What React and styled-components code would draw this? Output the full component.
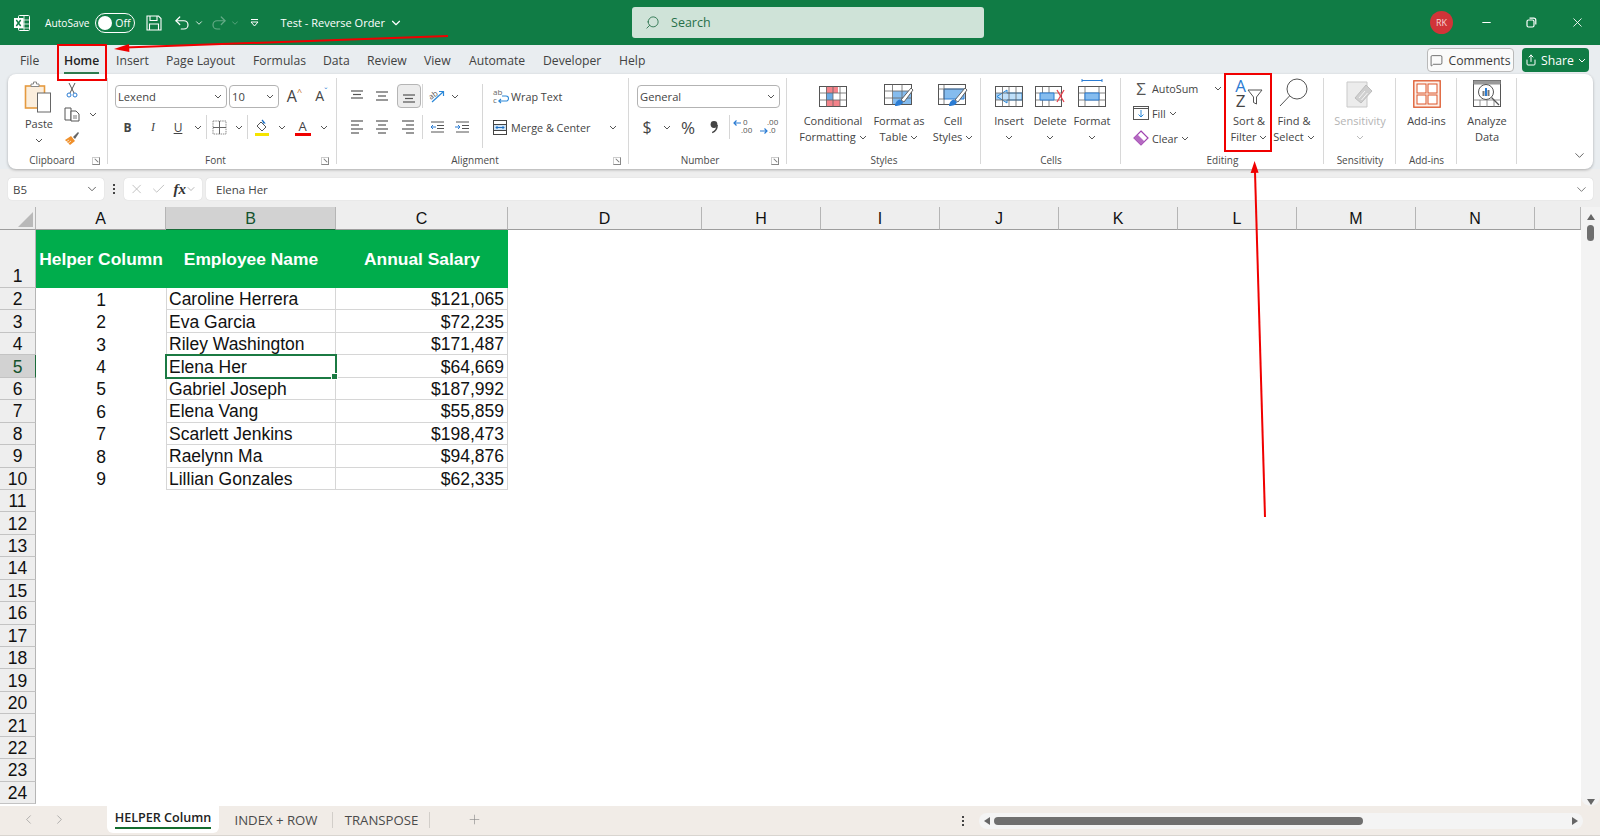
import React from "react";
import styled, { createGlobalStyle } from "styled-components";
import { Undo2, Redo2, ChevronDown, ChevronLeft, ChevronRight, Search, Minus, X, Check, Plus, MessageSquare, Share } from "lucide-react";

const UI = `"Open Sans", "Noto Sans", sans-serif`;
const CELL = `"Liberation Sans", Arial, sans-serif`;

const Global = createGlobalStyle`
  html, body { margin: 0; padding: 0; background: #f1ece7; }
  * { box-sizing: border-box; }
  #root { width: 1600px; height: 836px; overflow: hidden; }
`;

// ---- page shell
const Page = styled.div`
  position: relative;
  width: 1600px;
  height: 836px;
  display: flex;
  flex-direction: column;
  overflow: hidden;
  background: #f1ece7;
  font-family: ${UI};
  color: #333;
`;

// ---- title bar
const TitleBar = styled.div`
  height: 45px;
  flex: none;
  display: flex;
  align-items: center;
  background: #107c45;
  color: #fff;
  font-size: 11px;
`;
const TitleItem = styled.div`
  display: flex;
  align-items: center;
  flex: none;
  margin-left: ${(p) => p.$ml || 0}px;
  opacity: ${(p) => p.$dim ? 0.35 : 1};
  font-size: ${(p) => p.$fs ? p.$fs + "px" : "inherit"};
`;
const Toggle = styled.div`
  width: 40px;
  height: 20px;
  margin-left: 5px;
  border: 1px solid #fff;
  border-radius: 10px;
  display: flex;
  align-items: center;
  padding: 0 3px 0 2px;
  justify-content: space-between;
  font-size: 10.5px;
  &::before {
    content: "";
    width: 14px;
    height: 14px;
    border-radius: 50%;
    background: #fff;
  }
`;
const SearchBox = styled.div`
  width: 352px;
  height: 31px;
  flex: none;
  margin-left: 229px;
  background: #cfe3d8;
  border-radius: 3px;
  display: flex;
  align-items: center;
  gap: 11px;
  padding-left: 13px;
  color: #27704a;
  font-size: 12.5px;
`;
const Avatar = styled.div`
  width: 23px;
  height: 23px;
  margin-left: 446px;
  border-radius: 50%;
  background: #d13438;
  display: flex;
  align-items: center;
  justify-content: center;
  font-size: 9px;
  color: #f6d5d5;
  flex: none;
`;

// ---- tab row
const TabRow = styled.div`
  height: 29px;
  flex: none;
  display: flex;
  align-items: center;
  padding: 1px 0 0 20px;
  background: #e9edf0;
  position: relative;
`;
const Tab = styled.div`
  width: ${(p) => p.$w}px;
  flex: none;
  text-align: left;
  font-size: 12.2px;
  color: ${(p) => p.$active ? "#222" : "#424242"};
  font-weight: ${(p) => p.$active ? 600 : 400};
  position: relative;
  ${(p) => p.$active && `
    &::after {
      content: "";
      position: absolute;
      left: 0; width: 35px; bottom: -5px;
      height: 2px;
      background: #2f7d50;
    }
  `}
`;
const TabRight = styled.div`
  margin-left: auto;
  margin-right: 11px;
  display: flex;
  gap: 8px;
  align-items: center;
`;
const CommentsBtn = styled.div`
  width: 87px;
  height: 24px;
  border: 1px solid #b9b9b9;
  border-radius: 4px;
  background: #fafafa;
  display: flex;
  align-items: center;
  justify-content: center;
  gap: 5px;
  font-size: 12.2px;
  color: #3a3a3a;
`;
const ShareBtn = styled.div`
  width: 67px;
  height: 24px;
  border-radius: 4px;
  background: #107c45;
  color: #fff;
  display: flex;
  align-items: center;
  justify-content: center;
  gap: 4px;
  font-size: 12.2px;
`;

// ---- ribbon
const RibbonBand = styled.div`
  flex: none;
  background: #e9edf0;
  padding: 0 7px 0 8px;
  position: relative;
  z-index: 2;
`;
const Ribbon = styled.div`
  height: 95px;
  background: #fff;
  border-radius: 8px;
  box-shadow: 0 1px 3px rgba(0, 0, 0, 0.28);
  display: flex;
  position: relative;
`;
const Group = styled.div`
  position: relative;
  width: ${(p) => p.$w}px;
  flex: none;
  display: flex;
  flex-direction: column;
  padding-left: ${(p) => p.$pl || 0}px;
  &::after {
    content: "";
    position: absolute;
    right: 0;
    top: 4px;
    bottom: 5px;
    width: 1px;
    background: #d8d8d8;
  }
`;
const GroupBody = styled.div`
  flex: 1;
  display: flex;
  align-items: flex-start;
  gap: ${(p) => p.$gap || 0}px;
  min-height: 0;
`;
const GroupLabel = styled.div`
  position: absolute;
  left: 0;
  right: ${(p) => p.$r || 0}px;
  bottom: 2px;
  text-align: center;
  font-size: 10px;
  line-height: 14px;
  color: #4a4a4a;
`;
const Launcher = styled.div`
  position: absolute;
  right: 8px;
  bottom: 4px;
  width: 8px;
  height: 8px;
  border: 1px solid #888;
  border-top-color: #ccc;
  border-left-color: #ccc;
  &::after {
    content: "";
    position: absolute;
    left: 1px; top: 2px;
    width: 5px;
    height: 1px;
    background: #777;
    transform: rotate(45deg);
  }
`;
const Stack = styled.div`
  width: ${(p) => p.$w ? p.$w + "px" : "auto"};
  flex: none;
  display: flex;
  flex-direction: column;
  gap: ${(p) => p.$gap ?? 9}px;
  padding-top: ${(p) => p.$pt ?? 11}px;
  margin-left: ${(p) => p.$ml || 0}px;
`;
const ToolRow = styled.div`
  height: 22px;
  display: flex;
  align-items: center;
`;
const Tool = styled.div`
  width: ${(p) => p.$w}px;
  height: 22px;
  flex: none;
  display: flex;
  align-items: center;
  justify-content: center;
  font-family: ${(p) => p.$serif ? `"Liberation Serif", serif` : "inherit"};
  font-size: 12px;
  color: #444;
`;
const Pressed = styled(Tool)`
  height: 24px;
  border: 1px solid #b5b5b5;
  border-radius: 4px;
  background: #ececec;
  margin-left: 3px;
`;
const MiniSep = styled.div`
  width: 1px;
  height: 24px;
  background: #d6d6d6;
  flex: none;
  margin: 0 ${(p) => p.$m || 0}px;
`;
const TallSep = styled.div`
  width: 1px;
  height: 64px;
  margin: 10px 0 0 ${(p) => p.$ml || 0}px;
  background: #d6d6d6;
  flex: none;
`;
const Select = styled.div`
  width: ${(p) => p.$w}px;
  height: 23px;
  flex: none;
  border: 1px solid #b3b3b3;
  border-radius: 4px;
  background: #fff;
  display: flex;
  align-items: center;
  justify-content: space-between;
  padding: 0 4px 0 2px;
  font-size: 11.2px;
  color: #444;
  margin-right: ${(p) => p.$mr || 0}px;
`;
const TextTool = styled.div`
  display: flex;
  align-items: center;
  gap: ${(p) => p.$gap ?? 3}px;
  font-size: 10.8px;
  color: #444;
  height: 22px;
  flex: none;
`;
const Sigma = styled.span`
  font-size: 17px;
  width: 16px;
  text-align: center;
  color: #555;
`;
const PushChev = styled.span`
  display: flex;
  margin-left: ${(p) => p.$ml}px;
`;
const BigBtn = styled.div`
  width: ${(p) => p.$w ? p.$w + "px" : "100%"};
  flex: none;
  display: flex;
  flex-direction: column;
  align-items: center;
  padding-top: 4px;
  font-size: 11px;
  line-height: 16px;
  color: ${(p) => p.$off ? "#b4b4b4" : "#444"};
  text-align: center;
  white-space: nowrap;
`;
const BigIcon = styled.div`
  height: ${(p) => p.$h || 30}px;
  display: flex;
  align-items: flex-end;
  justify-content: center;
  margin-bottom: ${(p) => p.$mb ?? 5}px;
`;
const Line = styled.div`
  height: 16px;
  display: flex;
  align-items: center;
  justify-content: center;
  gap: 3px;
`;
const FontGrow = styled.div`
  font-size: ${(p) => p.$fs || 16}px;
  color: #444;
  display: flex;
  align-items: flex-start;
  line-height: 18px;
  span { font-size: 9px; line-height: 9px; color: ${(p) => p.$tint}; }
`;
const ColorA = styled.div`
  width: 16px;
  font-size: 13px;
  line-height: 14px;
  text-align: center;
  color: #444;
  border-bottom: 3px solid ${(p) => p.$bar};
`;
const SortLetters = styled.div`
  display: flex;
  flex-direction: column;
  font-size: 17px;
  line-height: 15px;
  text-align: center;
  margin-right: 1px;
`;
const SortA = styled.span` color: #2b7cd3; `;
const SortZ = styled.span` color: #444; `;
const FunnelWrap = styled.div`
  display: flex;
  margin-bottom: 3px;
`;
const ExpandBtn = styled.div`
  position: absolute;
  right: 6px;
  bottom: 6px;
  display: flex;
  color: #444;
`;

// ---- formula bar
const FormulaRow = styled.div`
  height: 38px;
  flex: none;
  display: flex;
  align-items: center;
  padding: 2px 7px 0 8px;
  background: #eeeeee;
`;
const FBox = styled.div`
  height: 22px;
  background: #fff;
  border-radius: 4px;
  display: flex;
  align-items: center;
  justify-content: ${(p) => p.$between ? "space-between" : "flex-start"};
  width: ${(p) => p.$w ? p.$w + "px" : "auto"};
  flex: ${(p) => p.$w ? "none" : 1};
  font-size: 11.5px;
  color: ${(p) => p.$muted ? "#b0b0b0" : "#444"};
  padding: ${(p) => p.$pad || "0 5px"};
  gap: ${(p) => p.$gap || 0}px;
  margin-left: ${(p) => p.$ml || 0}px;
  box-shadow: 0 0 1px rgba(0, 0, 0, 0.2);
`;
const Dots = styled.div`
  width: 2px;
  height: ${(p) => p.$h || 10}px;
  margin-left: ${(p) => p.$ml || 0}px;
  flex: none;
  background: repeating-linear-gradient(to bottom, #444 0 2px, transparent 2px 4px);
`;
const Fx = styled.span`
  font-family: "Liberation Serif", serif;
  font-style: italic;
  font-size: 15px;
  color: #333;
  font-weight: 700;
`;
const FxChev = styled.span`
  display: flex;
  margin-left: -8px;
  color: #888;
`;

// ---- sheet
const SheetArea = styled.div`
  flex: 1;
  min-height: 0;
  display: flex;
`;
const Sheet = styled.div`
  width: 1581px;
  flex: none;
  background: #fff;
  display: flex;
  flex-direction: column;
  font-family: ${CELL};
  color: #111;
`;
const SRow = styled.div`
  display: flex;
  flex: none;
  height: ${(p) => p.$h}px;
`;
const Corner = styled.div`
  width: 36px;
  flex: none;
  background: #eeeeee;
  border-right: 1px solid #b5b5b5;
  border-bottom: 1px solid #9d9d9d;
  display: flex;
  justify-content: flex-end;
  align-items: flex-end;
  padding: 0 2px 2px 0;
  &::before {
    content: "";
    width: 0;
    height: 0;
    border-left: 15px solid transparent;
    border-bottom: 15px solid #b9b9b9;
  }
`;
const ColHead = styled.div`
  width: ${(p) => p.$w}px;
  flex: none;
  background: ${(p) => p.$on ? "#d2d2d2" : "#eeeeee"};
  border-right: 1px solid #b5b5b5;
  border-bottom: 1px solid ${(p) => p.$on ? "#1b6b3a" : "#9d9d9d"};
  display: flex;
  align-items: center;
  justify-content: center;
  padding-top: 2px;
  font-size: 16px;
  color: ${(p) => p.$on ? "#14532d" : "#111"};
`;
const RowHead = styled.div`
  width: 36px;
  flex: none;
  background: ${(p) => p.$on ? "#d2d2d2" : "#eeeeee"};
  border-right: 1px solid ${(p) => p.$on ? "#1b6b3a" : "#b5b5b5"};
  border-bottom: 1px solid #c3c3c3;
  display: flex;
  align-items: ${(p) => p.$bottom ? "flex-end" : "center"};
  justify-content: center;
  padding-top: 2px;
  font-size: 17.5px;
  color: ${(p) => p.$on ? "#14532d" : "#111"};
`;
const GreenCell = styled.div`
  width: ${(p) => p.$w}px;
  flex: none;
  background: #00ad4c;
  color: #fff;
  font-weight: 700;
  font-size: 17.4px;
  display: flex;
  align-items: center;
  justify-content: center;
  white-space: nowrap;
`;
const DataCell = styled.div`
  width: ${(p) => p.$w}px;
  flex: none;
  position: relative;
  display: flex;
  align-items: center;
  font-size: 17.5px;
  white-space: nowrap;
  justify-content: ${(p) => p.$align || "flex-start"};
  padding: ${(p) => p.$align === "flex-end" ? "2px 3px 0 0" : p.$align === "center" ? "2px 0 0" : "2px 0 0 2px"};
  border-left: ${(p) => p.$gridLeft ? "1px solid #d6d6d6" : "none"};
  border-right: ${(p) => p.$grid ? "1px solid #d6d6d6" : "none"};
  border-bottom: ${(p) => p.$grid ? "1px solid #d6d6d6" : "none"};
  ${(p) => p.$sel && `
    outline: 2px solid #1b7a43;
    outline-offset: -1px;
    padding-left: 3px;
    z-index: 1;
    &::after {
      content: "";
      position: absolute;
      right: -3px;
      bottom: -3px;
      width: 5px;
      height: 5px;
      background: #1b7a43;
      border: 1px solid #fff;
    }
  `}
`;
const VScroll = styled.div`
  width: 19px;
  flex: none;
  display: flex;
  flex-direction: column;
  align-items: center;
  background: #f3f3f3;
  border-radius: 0 0 10px 10px;
  padding: 7px 0 1px;
  justify-content: space-between;
`;
const VThumbWrap = styled.div`
  display: flex;
  flex-direction: column;
  align-items: center;
  gap: 5px;
`;
const VThumb = styled.div`
  width: 7px;
  height: 16px;
  border-radius: 4px;
  background: #6f6f6f;
`;
const Tri = styled.div`
  width: 0;
  height: 0;
  ${(p) => p.$dir === "up" && `border: 4px solid transparent; border-top: 0; border-bottom: 6px solid #666;`}
  ${(p) => p.$dir === "down" && `border: 4px solid transparent; border-bottom: 0; border-top: 6px solid #666;`}
  ${(p) => p.$dir === "left" && `border: 4px solid transparent; border-left: 0; border-right: 6px solid #666;`}
  ${(p) => p.$dir === "right" && `border: 4px solid transparent; border-right: 0; border-left: 6px solid #666;`}
`;

// ---- sheet tabs
const SheetBar = styled.div`
  height: 30px;
  flex: none;
  display: flex;
  align-items: flex-start;
  background: #f1ece7;
  border-bottom: 1px solid #d9d5d0;
  font-size: 13.2px;
  color: #4a4a4a;
  position: relative;
`;
const NavArrows = styled.div`
  width: 107px;
  flex: none;
  height: 27px;
  display: flex;
  align-items: center;
  padding-left: 21px;
  gap: 16px;
  color: #8a8a8a;
`;
const ActiveTab = styled.div`
  width: 112px;
  height: 27px;
  flex: none;
  background: #fff;
  border-radius: 0 0 6px 6px;
  display: flex;
  flex-direction: column;
  align-items: center;
  padding-top: 3px;
  font-weight: 600;
  color: #222;
  span {
    line-height: 17px;
    border-bottom: 2px solid #146c2e;
    padding-bottom: 1px;
    font-size: 12.6px;
  }
`;
const SheetTab = styled.div`
  flex: none;
  width: ${(p) => p.$w}px;
  height: 27px;
  display: flex;
  align-items: center;
  justify-content: center;
  position: relative;
  &::after {
    content: "";
    position: absolute;
    right: 0;
    top: 6px;
    height: 16px;
    width: 1px;
    background: #d2cec9;
  }
`;
const AddTab = styled.div`
  width: 52px;
  flex: none;
  height: 26px;
  display: flex;
  align-items: center;
  justify-content: flex-end;
  color: #888;
`;
const HScroll = styled.div`
  position: absolute;
  left: 979px;
  top: 7px;
  width: 604px;
  height: 16px;
  background: #f4f4f4;
  border-radius: 8px;
  display: flex;
  align-items: center;
  padding: 0 5px;
`;
const HThumb = styled.div`
  width: 369px;
  height: 8px;
  margin-left: 4px;
  border-radius: 4px;
  background: #6f6f6f;
  margin-right: auto;
`;
const BarDots = styled(Dots)`
  position: absolute;
  left: 962px;
  top: 10px;
  height: 10px;
`;

// ---- red annotations on top of the screenshot
const RedBox = styled.div`
  position: absolute;
  left: ${(p) => p.$x}px;
  top: ${(p) => p.$y}px;
  width: ${(p) => p.$w}px;
  height: ${(p) => p.$h}px;
  border: 2px solid #f00000;
  pointer-events: none;
  z-index: 5;
`;
const ArrowLayer = styled.svg`
  position: absolute;
  left: 0;
  top: 0;
  pointer-events: none;
  z-index: 5;
`;

// ---- drawn icons
const Chev = ({ c = "#555" }) => (
  <svg width="8" height="5" viewBox="0 0 8 5"><path d="M1 1l3 3 3-3" fill="none" stroke={c} strokeWidth="1" /></svg>
);
const ExcelLogo = () => (
  <svg width="18" height="18" viewBox="0 0 18 18">
    <rect x="5.5" y="1.5" width="11" height="15" rx="1" fill="none" stroke="#fff" />
    <path d="M11 1.5v15M5.5 6h11M5.5 10h11M5.5 14h11" stroke="#fff" strokeWidth="0.8" />
    <rect x="1" y="4" width="9.5" height="10" fill="#fff" />
    <path d="M3.3 6l4.4 6M7.7 6l-4.4 6" stroke="#107c45" strokeWidth="1.4" />
  </svg>
);
const SaveIc = () => (
  <svg width="16" height="16" viewBox="0 0 16 16" fill="none" stroke="#fff" strokeWidth="1.1">
    <path d="M1 1h11.5L15 3.5V15H1z" />
    <path d="M4 1v4.5h7V1M3.5 15V9h9v6" />
  </svg>
);
const QatMore = () => (
  <svg width="9" height="9" viewBox="0 0 9 9"><path d="M1 1.5h7" stroke="#fff" /><path d="M1 4l3.5 4L8 4z" fill="none" stroke="#fff" /></svg>
);
const RestoreIc = () => (
  <svg width="11" height="11" viewBox="0 0 11 11" fill="none" stroke="#fff" strokeWidth="1.2">
    <rect x="1" y="3" width="7" height="7" rx="1.5" />
    <path d="M3.5 1.2h4.3a2 2 0 0 1 2 2v4.3" />
  </svg>
);
const PasteIc = () => (
  <svg width="30" height="32" viewBox="0 0 30 32">
    <rect x="1.5" y="5" width="19" height="22" fill="#fbeedd" stroke="#e59a3f" strokeWidth="1.6" />
    <path d="M7 5V3h2.5V1h3v2H15v2.5H7z" fill="#fff" stroke="#888" />
    <rect x="13.5" y="12" width="13" height="19" fill="#fff" stroke="#666" />
  </svg>
);
const ScissorsIc = () => (
  <svg width="12" height="16" viewBox="0 0 12 16" fill="none">
    <path d="M3 1l5 10M9 1L4 11" stroke="#555" />
    <circle cx="3" cy="13" r="2" stroke="#2b7cd3" />
    <circle cx="9" cy="13" r="2" stroke="#2b7cd3" />
  </svg>
);
const CopyIc = () => (
  <svg width="16" height="15" viewBox="0 0 16 15" fill="none" stroke="#555">
    <path d="M1 1h6v12H1z" />
    <path d="M7 4h5l3 3v7H7z" fill="#fff" />
    <path d="M9 9h4M9 11h4" strokeWidth="0.8" />
  </svg>
);
const PainterIc = () => (
  <svg width="16" height="15" viewBox="0 0 16 15">
    <path d="M1 9l6-4 4 5-5 4z" fill="#ef8f2a" />
    <path d="M9 6l5-5 1 1-4 6z" fill="#666" />
    <path d="M2 11l3-2M4 12.5l3-2.5" stroke="#fff" strokeWidth="0.7" />
  </svg>
);
const Lines = ({ rows }) => (
  <svg width="16" height="16" viewBox="0 0 16 16" stroke="#555" strokeWidth="1.2">
    {rows.map((r, i) => <path key={i} d={`M${r[0]} ${r[2]}H${r[1]}`} />)}
  </svg>
);
const BordersIc = () => (
  <svg width="15" height="15" viewBox="0 0 15 15" fill="none" stroke="#8a8a8a">
    <rect x="1" y="1" width="13" height="13" strokeDasharray="1.5 0.8" />
    <path d="M7.5 1v13M1 7.5h13" stroke="#666" />
  </svg>
);
const FillIc = () => (
  <svg width="16" height="17" viewBox="0 0 16 17">
    <path d="M3 7l4-4 5 5-4 4z" fill="none" stroke="#555" />
    <path d="M8 1l2.5 3-2 0" fill="none" stroke="#1c6fc4" strokeWidth="1.2" />
    <rect x="1" y="14" width="14" height="3" fill="#f5e400" />
  </svg>
);
const OrientIc = () => (
  <svg width="18" height="16" viewBox="0 0 18 16" overflow="visible">
    <text x="1" y="10" fontSize="8" fontFamily="Open Sans" fill="#555" transform="rotate(-35 5 8)">ab</text>
    <path d="M4 14L15 4M11 3.5h4.5V8" fill="none" stroke="#2b88d8" strokeWidth="1.2" />
  </svg>
);
const WrapIc = () => (
  <svg width="16" height="17" viewBox="0 0 16 17" overflow="visible">
    <text x="0" y="7" fontSize="8" fontFamily="Open Sans" fill="#666">ab</text>
    <text x="0" y="15" fontSize="8" fontFamily="Open Sans" fill="#666">c</text>
    <path d="M6 13h7a2 2 0 0 0 0-5H9M8 11l-2.2 2L8 15" fill="none" stroke="#2b88d8" strokeWidth="1.1" />
  </svg>
);
const MergeIc = () => (
  <svg width="14" height="15" viewBox="0 0 14 15" fill="none">
    <rect x="0.5" y="0.5" width="13" height="14" stroke="#444" />
    <rect x="0.5" y="4.5" width="13" height="6" fill="#cfe4f7" stroke="#444" />
    <path d="M3 7.5h8M4.5 6L3 7.5 4.5 9M9.5 6L11 7.5 9.5 9" stroke="#1c6fc4" />
  </svg>
);
const IndentIc = ({ out }) => (
  <svg width="14" height="12" viewBox="0 0 14 12" fill="none">
    <path d="M1 1h13M7 4.5h7M7 7.5h7M1 11h13" stroke="#555" />
    {out
      ? <path d="M6 6H1M3 4L1 6l2 2" stroke="#2b7cd3" />
      : <path d="M0 6h5M3 4l2 2-2 2" stroke="#2b7cd3" />}
  </svg>
);
const DecIc = ({ inc }) => (
  <svg width="20" height="18" viewBox="0 0 20 18" fontSize="8" fontFamily="Open Sans" fill="#555" overflow="visible">
    <text x={inc ? 10 : 8} y="7">{inc ? "0" : ".00"}</text>
    <text x={inc ? 8 : 10} y="15">{inc ? ".00" : ".0"}</text>
    <path d={inc ? "M8 5H1M3.5 2.5L1 5l2.5 2.5" : "M1 13h7M5.5 10.5L8 13l-2.5 2.5"} fill="none" stroke="#2b7cd3" strokeWidth="1.2" />
  </svg>
);
const CommaIc = () => (
  <svg width="10" height="14" viewBox="0 0 10 14">
    <circle cx="5" cy="4.5" r="3.4" fill="#444" />
    <path d="M8.2 5c0 4-2.2 6.5-5 7.6" fill="none" stroke="#444" strokeWidth="1.4" />
  </svg>
);
const GridBase = ({ children }) => (
  <svg width="28" height="23" viewBox="0 0 28 23" fill="none">
    {children}
    <rect x="0.5" y="1.5" width="27" height="20" stroke="#555" />
    <path d="M7.5 1.5v20M14 1.5v20M21 1.5v20M0.5 8h27M0.5 15h27" stroke="#666" strokeWidth="0.8" />
  </svg>
);
const Brush = () => (
  <>
    <path d="M17 17L27 5l2 2-9 12z" fill="#fff" stroke="#555" strokeWidth="0.9" />
    <path d="M11 23c0-3 2-6 5-6.5l3 2.5c-1 3-4 4-8 4z" fill="#2b7cd3" />
  </>
);
const CondIc = () => (
  <svg width="28" height="23" viewBox="0 0 28 23" fill="none">
    <path d="M7 1.5h12v6.5H7zM7 15h14v6.5H7z" fill="#f3838a" />
    <path d="M7 8h7v7H7z" fill="#6aaae4" />
    <rect x="0.5" y="1.5" width="27" height="20" stroke="#555" />
    <path d="M7.5 1.5v20M14 1.5v20M21 1.5v20M0.5 8h27M0.5 15h27" stroke="#666" strokeWidth="0.8" />
  </svg>
);
const TableIc = () => (
  <svg width="30" height="25" viewBox="0 0 30 25" fill="none">
    <path d="M9 8h18v14H9z" fill="#85bcee" />
    <rect x="0.5" y="1.5" width="27" height="20" stroke="#555" />
    <path d="M8.5 1.5v20M18 1.5v20M0.5 8h27M0.5 15h27" stroke="#666" strokeWidth="0.8" />
    <Brush />
  </svg>
);
const StylesIc = () => (
  <svg width="30" height="25" viewBox="0 0 30 25" fill="none">
    <path d="M6 6h20v10H6z" fill="#85bcee" stroke="#2b7cd3" />
    <rect x="0.5" y="1.5" width="27" height="20" stroke="#555" />
    <path d="M6 1.5v20M0.5 6h27M0.5 16h6" stroke="#666" strokeWidth="0.8" />
    <Brush />
  </svg>
);
const InsertIc = () => (
  <GridBase>
    <path d="M1 8h27v7H1z" fill="#9fcbf2" />
    <path d="M12 5L2 11.5 12 18v-3h15V8H12z" fill="#bfe0fa" stroke="#2b88d8" />
  </GridBase>
);
const DeleteIc = () => (
  <svg width="30" height="23" viewBox="0 0 30 23" fill="none">
    <rect x="0.5" y="1.5" width="26" height="20" stroke="#555" />
    <path d="M7.5 1.5v20M14 1.5v20M0.5 8h26M0.5 15h26" stroke="#666" strokeWidth="0.8" />
    <path d="M5 8h14v7H5z" fill="#85bcee" stroke="#2b7cd3" />
    <path d="M22 5l7 12M29 5l-7 12" stroke="#e8434f" strokeWidth="1.3" />
  </svg>
);
const FormatIc = () => (
  <svg width="28" height="29" viewBox="0 0 28 29" fill="none">
    <path d="M4 1.5h20M4 0v3M24 0v3" stroke="#2b7cd3" />
    <rect x="0.5" y="7.5" width="27" height="20" stroke="#555" />
    <path d="M7 7.5v20M21 7.5v20M0.5 14h27M0.5 21h27" stroke="#666" strokeWidth="0.8" />
    <path d="M7 14h14v7H7z" fill="#85bcee" stroke="#2b7cd3" />
  </svg>
);
const FillDownIc = () => (
  <svg width="16" height="14" viewBox="0 0 16 14" fill="none">
    <rect x="0.5" y="0.5" width="15" height="13" stroke="#555" />
    <path d="M0.5 2.5h15" stroke="#555" />
    <path d="M8 4v7M5.5 8.5L8 11l2.5-2.5" stroke="#2b88d8" />
  </svg>
);
const EraserIc = () => (
  <svg width="16" height="16" viewBox="0 0 16 16">
    <path d="M8 1l7 7-7 7-7-7z" fill="none" stroke="#a044b0" strokeWidth="1.2" />
    <path d="M4.5 4.5l7 7L8 15 1 8z" fill="#b56ac2" />
  </svg>
);
const FunnelIc = () => (
  <svg width="16" height="16" viewBox="0 0 16 16" fill="none" stroke="#555">
    <path d="M1 1h14L9.5 8v7l-3-1.5V8z" />
  </svg>
);
const FindIc = () => (
  <svg width="30" height="30" viewBox="0 0 30 30" fill="none" stroke="#555">
    <circle cx="18" cy="11" r="10" strokeWidth="1" />
    <path d="M10.5 18L1 28" strokeWidth="1" />
  </svg>
);
const SensitivityIc = () => (
  <svg width="28" height="29" viewBox="0 0 28 29" fill="none">
    <path d="M1 3h20v25H1z" fill="#ececec" stroke="#c9c9c9" />
    <path d="M9 19L20 6l6 6-11 12z" fill="#cfcfcf" stroke="#bdbdbd" />
    <path d="M13 19l6-7M15.5 21l6-7" stroke="#f5f5f5" />
  </svg>
);
const AddInsIc = () => (
  <svg width="28" height="28" viewBox="0 0 28 28" fill="none">
    <rect x="0.8" y="0.8" width="26.4" height="26.4" stroke="#dc5528" strokeWidth="1.3" fill="#fdf1eb" />
    <rect x="4" y="4" width="9" height="9" stroke="#dc5528" fill="#fff" />
    <rect x="15" y="4" width="9" height="9" stroke="#dc5528" fill="#fff" />
    <rect x="4" y="15" width="9" height="9" stroke="#dc5528" fill="#fff" />
    <rect x="15" y="15" width="9" height="9" stroke="#dc5528" fill="#fff" />
  </svg>
);
const AnalyzeIc = () => (
  <svg width="28" height="29" viewBox="0 0 28 29" fill="none">
    <rect x="0.5" y="1.5" width="27" height="26" stroke="#555" />
    <path d="M0.5 5h27M0.5 21h27M7 21v7M14 21v7M21 21v7" stroke="#777" strokeWidth="0.8" />
    <path d="M0.5 1.5h27V5H.5z" fill="#999" />
    <circle cx="13" cy="13" r="7.5" fill="#fff" stroke="#555" />
    <path d="M18.5 18.5L26 26" stroke="#555" strokeWidth="1.3" />
    <path d="M9.5 12h2v5h-2z" fill="#777" />
    <path d="M12 9h2v8h-2z" fill="#2b7cd3" />
    <path d="M14.5 11h2v6h-2z" fill="#777" />
  </svg>
);

// ---- data
const tabs = [["File", 44], ["Home", 52], ["Insert", 50], ["Page Layout", 87], ["Formulas", 70], ["Data", 44], ["Review", 57], ["View", 45], ["Automate", 74], ["Developer", 76], ["Help", 40]];
const colWidths = { A: 130, B: 170, C: 172 };
const heads = [["A", 130], ["B", 170], ["C", 172], ["D", 194], ["H", 119], ["I", 119], ["J", 119], ["K", 119], ["L", 119], ["M", 119], ["N", 119], ["", 46]];
const people = [
  ["Caroline Herrera", "$121,065"],
  ["Eva Garcia", "$72,235"],
  ["Riley Washington", "$171,487"],
  ["Elena Her", "$64,669"],
  ["Gabriel Joseph", "$187,992"],
  ["Elena Vang", "$55,859"],
  ["Scarlett Jenkins", "$198,473"],
  ["Raelynn Ma", "$94,876"],
  ["Lillian Gonzales", "$62,335"],
];
const ROW_H = 22.45;
const emptyRows = [11, 12, 13, 14, 15, 16, 17, 18, 19, 20, 21, 22, 23, 24];

export default function App() {
  return (
    <Page>
      <Global />
      <TitleBar>
        <TitleItem $ml={13}><ExcelLogo /></TitleItem>
        <TitleItem $ml={14} $fs={10.2}>AutoSave<Toggle>Off</Toggle></TitleItem>
        <TitleItem $ml={11}><SaveIc /></TitleItem>
        <TitleItem $ml={11}><Undo2 size={18} strokeWidth={1.6} /></TitleItem>
        <TitleItem $ml={3}><ChevronDown size={10} /></TitleItem>
        <TitleItem $ml={6} $dim><Redo2 size={18} strokeWidth={1.6} /></TitleItem>
        <TitleItem $ml={2} $dim><ChevronDown size={10} /></TitleItem>
        <TitleItem $ml={10}><QatMore /></TitleItem>
        <TitleItem $ml={22}>Test - Reverse Order<ChevronDown size={14} style={{ marginLeft: 4 }} /></TitleItem>
        <SearchBox><Search size={15} strokeWidth={1.4} style={{ transform: "scaleX(-1)" }} />Search</SearchBox>
        <Avatar>RK</Avatar>
        <TitleItem $ml={27}><Minus size={13} /></TitleItem>
        <TitleItem $ml={33}><RestoreIc /></TitleItem>
        <TitleItem $ml={33}><X size={15} strokeWidth={1.4} /></TitleItem>
      </TitleBar>

      <TabRow>
        {tabs.map(([t, w]) => <Tab key={t} $w={w} $active={t === "Home"}>{t}</Tab>)}
        <TabRight>
          <CommentsBtn><MessageSquare size={13} strokeWidth={1.3} />Comments</CommentsBtn>
          <ShareBtn><Share size={12} />Share<Chev c="#fff" /></ShareBtn>
        </TabRight>
      </TabRow>

      <RibbonBand>
        <Ribbon>
          <Group $w={100}>
            <GroupBody>
              <BigBtn $w={62}>
                <BigIcon $h={35} $mb={3}><PasteIc /></BigIcon>
                <Line>Paste</Line>
                <Line><Chev /></Line>
              </BigBtn>
              <Stack $pt={5} $gap={2} $ml={-8}>
                <Tool $w={20}><ScissorsIc /></Tool>
                <ToolRow><Tool $w={20}><CopyIc /></Tool><PushChev $ml={7}><Chev /></PushChev></ToolRow>
                <Tool $w={20}><PainterIc /></Tool>
              </Stack>
            </GroupBody>
            <GroupLabel $r={12}>Clipboard</GroupLabel>
            <Launcher />
          </Group>

          <Group $w={229} $pl={7}>
            <Stack>
              <ToolRow>
                <Select $w={112} $mr={2}>Lexend<Chev /></Select>
                <Select $w={50}>10<Chev /></Select>
                <Tool $w={27} style={{ marginLeft: 2 }}><FontGrow $tint="#c26a1b">A<span>^</span></FontGrow></Tool>
                <Tool $w={27}><FontGrow $tint="#2b7cd3" $fs={14}>A<span>ˇ</span></FontGrow></Tool>
              </ToolRow>
              <ToolRow>
                <Tool $w={25} style={{ fontWeight: 700 }}>B</Tool>
                <Tool $w={26} $serif style={{ fontStyle: "italic" }}>I</Tool>
                <Tool $w={24} style={{ textDecoration: "underline" }}>U</Tool>
                <Tool $w={16}><Chev /></Tool>
                <MiniSep />
                <Tool $w={24}><BordersIc /></Tool>
                <Tool $w={16}><Chev /></Tool>
                <MiniSep />
                <Tool $w={28}><FillIc /></Tool>
                <Tool $w={12}><Chev /></Tool>
                <Tool $w={29}><ColorA $bar="#f00000">A</ColorA></Tool>
                <Tool $w={13}><Chev /></Tool>
              </ToolRow>
            </Stack>
            <GroupLabel $r={14}>Font</GroupLabel>
            <Launcher />
          </Group>

          <Group $w={292} $pl={7}>
            <GroupBody>
              <Stack>
                <ToolRow>
                  <Tool $w={25}><Lines rows={[[2, 14, 3], [4, 12, 6.5], [2, 14, 10]]} /></Tool>
                  <Tool $w={25}><Lines rows={[[2, 14, 4], [4, 12, 8], [2, 14, 12]]} /></Tool>
                  <Pressed $w={24}><Lines rows={[[2, 14, 7], [4, 12, 10.5], [2, 14, 14]]} /></Pressed>
                  <MiniSep $m={1} />
                  <Tool $w={26}><OrientIc /></Tool>
                  <Tool $w={10}><Chev /></Tool>
                </ToolRow>
                <ToolRow>
                  <Tool $w={25}><Lines rows={[[2, 14, 2], [2, 10, 6], [2, 14, 10], [2, 10, 14]]} /></Tool>
                  <Tool $w={25}><Lines rows={[[2, 14, 2], [4, 12, 6], [2, 14, 10], [4, 12, 14]]} /></Tool>
                  <Tool $w={27}><Lines rows={[[2, 14, 2], [6, 14, 6], [2, 14, 10], [6, 14, 14]]} /></Tool>
                  <MiniSep $m={1} />
                  <Tool $w={25}><IndentIc out /></Tool>
                  <Tool $w={25}><IndentIc /></Tool>
                </ToolRow>
              </Stack>
              <TallSep $ml={8} />
              <Stack $ml={10}>
                <TextTool $gap={2}><WrapIc />Wrap Text</TextTool>
                <TextTool $gap={4}><MergeIc />Merge &amp; Center<PushChev $ml={15}><Chev /></PushChev></TextTool>
              </Stack>
            </GroupBody>
            <GroupLabel $r={16}>Alignment</GroupLabel>
            <Launcher />
          </Group>

          <Group $w={158} $pl={8}>
            <Stack>
              <ToolRow><Select $w={143}>General<Chev /></Select></ToolRow>
              <ToolRow>
                <Tool $w={20} style={{ fontSize: 16 }}>$</Tool>
                <Tool $w={20}><Chev /></Tool>
                <Tool $w={22} style={{ fontSize: 17 }}>%</Tool>
                <Tool $w={30}><CommaIc /></Tool>
                <MiniSep />
                <Tool $w={26}><DecIc inc /></Tool>
                <Tool $w={26}><DecIc /></Tool>
              </ToolRow>
            </Stack>
            <GroupLabel $r={16}>Number</GroupLabel>
            <Launcher />
          </Group>

          <Group $w={194} $pl={11}>
            <GroupBody $gap={3}>
              <BigBtn $w={70}>
                <BigIcon><CondIc /></BigIcon>
                <Line>Conditional</Line>
                <Line>Formatting <Chev /></Line>
              </BigBtn>
              <BigBtn $w={56}>
                <BigIcon><TableIc /></BigIcon>
                <Line>Format as</Line>
                <Line>Table <Chev /></Line>
              </BigBtn>
              <BigBtn $w={46}>
                <BigIcon><StylesIc /></BigIcon>
                <Line>Cell</Line>
                <Line>Styles <Chev /></Line>
              </BigBtn>
            </GroupBody>
            <GroupLabel>Styles</GroupLabel>
          </Group>

          <Group $w={140} $pl={8}>
            <GroupBody>
              <BigBtn $w={40}>
                <BigIcon><InsertIc /></BigIcon>
                <Line>Insert</Line>
                <Line><Chev /></Line>
              </BigBtn>
              <BigBtn $w={42}>
                <BigIcon><DeleteIc /></BigIcon>
                <Line>Delete</Line>
                <Line><Chev /></Line>
              </BigBtn>
              <BigBtn $w={42}>
                <BigIcon><FormatIc /></BigIcon>
                <Line>Format</Line>
                <Line><Chev /></Line>
              </BigBtn>
            </GroupBody>
            <GroupLabel>Cells</GroupLabel>
          </Group>

          <Group $w={203} $pl={12}>
            <GroupBody>
              <Stack $pt={3} $gap={3} $w={93}>
                <TextTool><Sigma>Σ</Sigma>AutoSum<PushChev $ml={13}><Chev /></PushChev></TextTool>
                <TextTool><FillDownIc />Fill <Chev /></TextTool>
                <TextTool><EraserIc />Clear <Chev /></TextTool>
              </Stack>
              <BigBtn $w={46}>
                <BigIcon>
                  <SortLetters><SortA>A</SortA><SortZ>Z</SortZ></SortLetters>
                  <FunnelWrap><FunnelIc /></FunnelWrap>
                </BigIcon>
                <Line>Sort &amp;</Line>
                <Line>Filter <Chev /></Line>
              </BigBtn>
              <BigBtn $w={44}>
                <BigIcon><FindIc /></BigIcon>
                <Line>Find &amp;</Line>
                <Line>Select <Chev /></Line>
              </BigBtn>
            </GroupBody>
            <GroupLabel>Editing</GroupLabel>
          </Group>

          <Group $w={72}>
            <GroupBody>
              <BigBtn $off>
                <BigIcon><SensitivityIc /></BigIcon>
                <Line>Sensitivity</Line>
                <Line><Chev c="#bbb" /></Line>
              </BigBtn>
            </GroupBody>
            <GroupLabel>Sensitivity</GroupLabel>
          </Group>

          <Group $w={61}>
            <GroupBody>
              <BigBtn>
                <BigIcon><AddInsIc /></BigIcon>
                <Line>Add-ins</Line>
              </BigBtn>
            </GroupBody>
            <GroupLabel>Add-ins</GroupLabel>
          </Group>

          <Group $w={60}>
            <GroupBody>
              <BigBtn>
                <BigIcon><AnalyzeIc /></BigIcon>
                <Line>Analyze</Line>
                <Line>Data</Line>
              </BigBtn>
            </GroupBody>
          </Group>
          <ExpandBtn><ChevronDown size={15} strokeWidth={1.3} /></ExpandBtn>
        </Ribbon>
      </RibbonBand>

      <FormulaRow>
        <FBox $w={96} $between>B5<ChevronDown size={14} strokeWidth={1.4} /></FBox>
        <Dots $ml={9} />
        <FBox $w={78} $ml={9} $gap={7} $muted>
          <X size={16} strokeWidth={1.2} />
          <Check size={16} strokeWidth={1.2} />
          <Fx>fx</Fx>
          <FxChev><ChevronDown size={12} strokeWidth={1.2} /></FxChev>
        </FBox>
        <FBox $ml={4} $between $pad="0 4px 0 10px">Elena Her<ChevronDown size={15} strokeWidth={1.1} /></FBox>
      </FormulaRow>

      <SheetArea>
        <Sheet>
          <SRow $h={23}>
            <Corner />
            {heads.map(([h, w]) => <ColHead key={h} $w={w} $on={h === "B"}>{h}</ColHead>)}
          </SRow>
          <SRow $h={58}>
            <RowHead $bottom>1</RowHead>
            <GreenCell $w={colWidths.A}>Helper Column</GreenCell>
            <GreenCell $w={colWidths.B}>Employee Name</GreenCell>
            <GreenCell $w={colWidths.C}>Annual Salary</GreenCell>
          </SRow>
          {people.map(([name, pay], i) => (
            <SRow $h={ROW_H} key={name}>
              <RowHead $on={i === 3}>{i + 2}</RowHead>
              <DataCell $w={colWidths.A} $align="center">{i + 1}</DataCell>
              <DataCell $w={colWidths.B} $grid $gridLeft={i !== 3} $sel={i === 3}>{name}</DataCell>
              <DataCell $w={colWidths.C} $grid $align="flex-end">{pay}</DataCell>
            </SRow>
          ))}
          {emptyRows.map((n) => (
            <SRow $h={ROW_H} key={n}><RowHead>{n}</RowHead></SRow>
          ))}
        </Sheet>
        <VScroll>
          <VThumbWrap><Tri $dir="up" /><VThumb /></VThumbWrap>
          <Tri $dir="down" />
        </VScroll>
      </SheetArea>

      <SheetBar>
        <NavArrows><ChevronLeft size={15} strokeWidth={1} /><ChevronRight size={15} strokeWidth={1} /></NavArrows>
        <ActiveTab><span>HELPER Column</span></ActiveTab>
        <SheetTab $w={114}>INDEX + ROW</SheetTab>
        <SheetTab $w={97}>TRANSPOSE</SheetTab>
        <AddTab><Plus size={15} strokeWidth={1} /></AddTab>
        <BarDots />
        <HScroll><Tri $dir="left" /><HThumb /><Tri $dir="right" /></HScroll>
      </SheetBar>

      <RedBox $x={57} $y={44} $w={50} $h={37} />
      <RedBox $x={1224} $y={73} $w={48} $h={79} />
      <ArrowLayer width="1600" height="836" viewBox="0 0 1600 836">
        <path d="M448 36L125 47.5" stroke="#f00000" strokeWidth="2" fill="none" />
        <path d="M114 49l15-5 0.4 8z" fill="#f00000" />
        <path d="M1265 517L1255 172" stroke="#f00000" strokeWidth="2" fill="none" />
        <path d="M1254.6 161l-4 12 8-0.3z" fill="#f00000" />
      </ArrowLayer>
    </Page>
  );
}
